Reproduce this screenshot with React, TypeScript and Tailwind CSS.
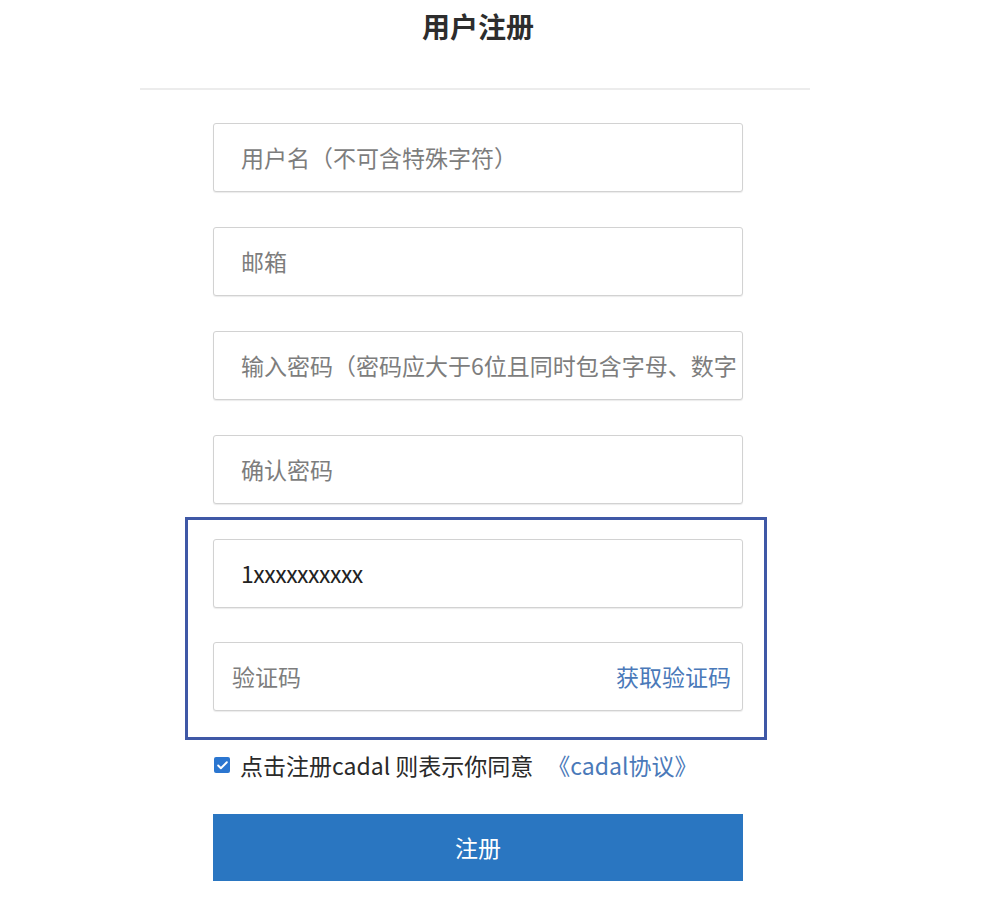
import { Check } from "lucide-react"

const font = { fontFamily: '"Noto Sans CJK SC", "Noto Sans", sans-serif' }

function Field({ placeholder, value }: { placeholder?: string; value?: string }) {
  return (
    <div className="h-[69px] w-full rounded-[3px] border border-[#d2d2d2] bg-white shadow-[0_1px_1px_rgba(0,0,0,0.08)] flex items-center pl-[27px] overflow-hidden">
      {value ? (
        <span className="text-[23px] text-[#222] whitespace-nowrap tracking-[-0.5px]">{value}</span>
      ) : (
        <span className="text-[23px] text-[#7d7d7d] whitespace-nowrap">{placeholder}</span>
      )}
    </div>
  )
}

export default function App() {
  return (
    <div className="min-h-[915px] w-[982px] bg-white" style={font}>
      <div className="flex flex-col items-center">
        {/* 标题 */}
        <h1 className="pt-[7px] h-[88px] text-[28px] font-bold text-[#2d2d2d] leading-[38px] ml-[-26px]">
          用户注册
        </h1>
        <div className="w-[670px] h-[2px] bg-[#ececec] ml-[-32px]" />

        <div className="w-[530px] mt-[33px] flex flex-col ml-[-26px]">
          <Field placeholder="用户名（不可含特殊字符）" />
          <div className="mt-[35px]">
            <Field placeholder="邮箱" />
          </div>
          <div className="mt-[35px]">
            <Field placeholder="输入密码（密码应大于6位且同时包含字母、数字" />
          </div>
          <div className="mt-[35px]">
            <Field placeholder="确认密码" />
          </div>

          {/* 手机号 + 验证码 */}
          <div className="mt-[13px] ml-[-28px] mr-[-24px] border-[3px] border-[#3f58a6] pt-[19px] pb-[26px] pl-[25px] pr-[21px]">
            <Field value="1xxxxxxxxxx" />
            <div className="mt-[34px] h-[69px] w-full rounded-[3px] border border-[#d2d2d2] bg-white shadow-[0_1px_1px_rgba(0,0,0,0.08)] flex items-center justify-between pl-[18px] pr-[11px]">
              <span className="text-[23px] text-[#7d7d7d]">验证码</span>
              <span className="text-[23px] text-[#4a79b9]">获取验证码</span>
            </div>
          </div>

          {/* 协议 */}
          <div className="mt-[8px] flex items-center h-[34px]">
            <span className="w-[16px] h-[16px] rounded-[2px] bg-[#2b76d0] flex items-center justify-center ml-[1px]">
              <Check size={13} strokeWidth={3.5} className="text-white" />
            </span>
            <span className="ml-[10px] text-[23px] text-[#2a2a2a] whitespace-nowrap">
              点击注册cadal 则表示你同意
            </span>
            <span className="ml-[14px] text-[23px] text-[#4a79b9] whitespace-nowrap">《cadal协议》</span>
          </div>

          <button className="mt-[32px] h-[67px] w-full bg-[#2a76c1] text-white text-[23px]">注册</button>
        </div>
      </div>
    </div>
  )
}
